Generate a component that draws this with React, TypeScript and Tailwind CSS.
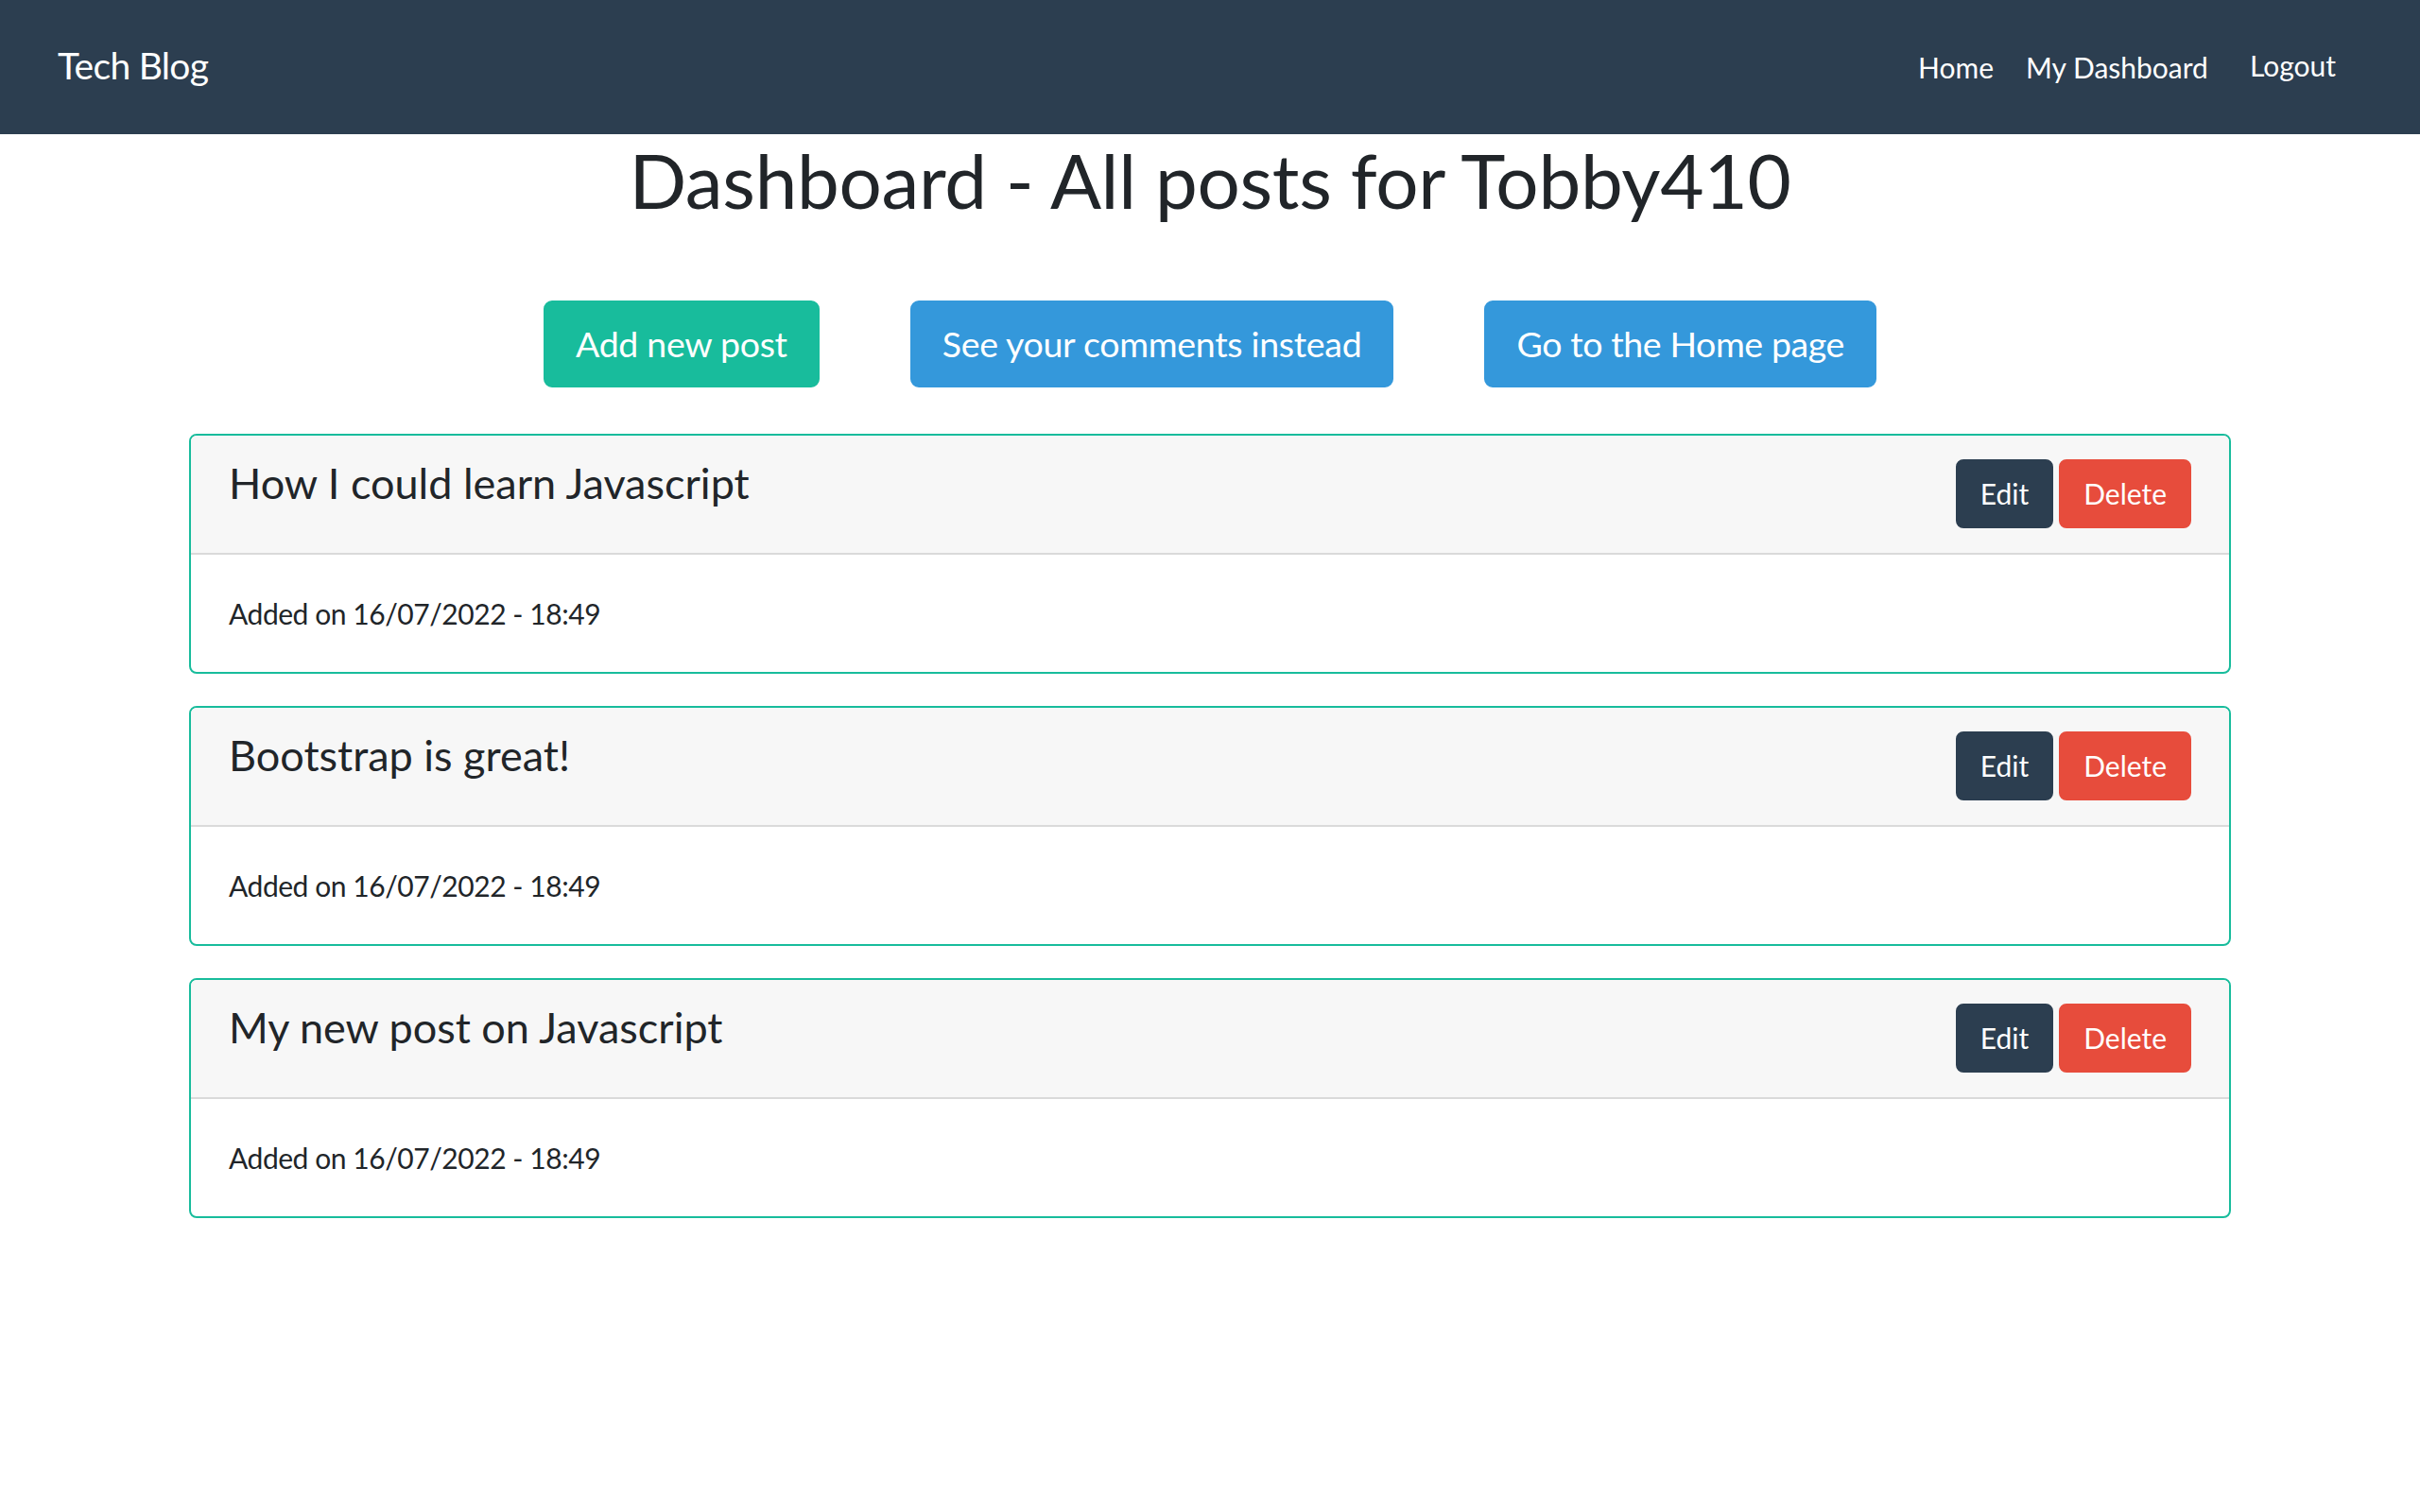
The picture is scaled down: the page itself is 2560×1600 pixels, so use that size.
import React from "react";

const posts = [
  { title: "How I could learn Javascript", date: "16/07/2022 - 18:49" },
  { title: "Bootstrap is great!", date: "16/07/2022 - 18:49" },
  { title: "My new post on Javascript", date: "16/07/2022 - 18:49" },
];

export default function App() {
  return (
    <div className="min-h-screen bg-white font-[Lato,sans-serif] text-[#212529]">
      <nav className="flex h-[142px] items-center bg-[#2c3e50] pl-[61px] pr-[89px] text-white">
        <span className="mb-[4px] text-[39px] leading-[1.5] tracking-[-0.7px]">Tech Blog</span>
        <div className="ml-auto flex items-center text-[30px] leading-[1.5]">
          <span>Home</span>
          <span className="ml-[34px]">My Dashboard</span>
          <span className="mb-[4px] ml-[44px]">Logout</span>
        </div>
      </nav>

      <h1 className="text-center text-[80px] font-normal leading-[1.2] tracking-[-0.3px]">
        Dashboard - All posts for Tobby410
      </h1>

      <div className="mt-[80px] flex justify-center gap-[96px]">
        <button className="rounded-[9px] border-2 border-[#18bc9c] bg-[#18bc9c] px-[32px] py-[16px] text-[37.5px] leading-[1.5] tracking-[-0.3px] text-white">
          Add new post
        </button>
        <button className="rounded-[9px] border-2 border-[#3498db] bg-[#3498db] px-[32px] py-[16px] text-[37.5px] leading-[1.5] tracking-[-0.3px] text-white">
          See your comments instead
        </button>
        <button className="rounded-[9px] border-2 border-[#3498db] bg-[#3498db] px-[32px] py-[16px] text-[37.5px] leading-[1.5] tracking-[-0.4px] text-white">
          Go to the Home page
        </button>
      </div>

      <div className="mx-auto mt-[49px] flex w-[2160px] flex-col gap-[34px]">
        {posts.map((p) => (
          <div
            key={p.title}
            className="overflow-hidden rounded-[8px] border-2 border-[#18bc9c] bg-white"
          >
            <div className="flex items-start justify-between border-b-2 border-[#dadada] bg-[#f7f7f7] px-[40px] pb-[26px] pt-[23px]">
              <h4 className="text-[45px] font-normal leading-[1.2]">{p.title}</h4>
              <div className="mt-[2px] flex gap-[6px]">
                <button className="rounded-[8px] border-2 border-[#2c3e50] bg-[#2c3e50] px-[24px] py-[12px] text-[30px] leading-[1.5] text-white">
                  Edit
                </button>
                <button className="rounded-[8px] border-2 border-[#e74c3c] bg-[#e74c3c] px-[24px] py-[12px] text-[30px] leading-[1.5] text-white">
                  Delete
                </button>
              </div>
            </div>
            <div className="px-[40px] pb-[39px] pt-[40px] text-[30px] leading-[1.5] tracking-[-0.45px]">
              Added on {p.date}
            </div>
          </div>
        ))}
      </div>
    </div>
  );
}
